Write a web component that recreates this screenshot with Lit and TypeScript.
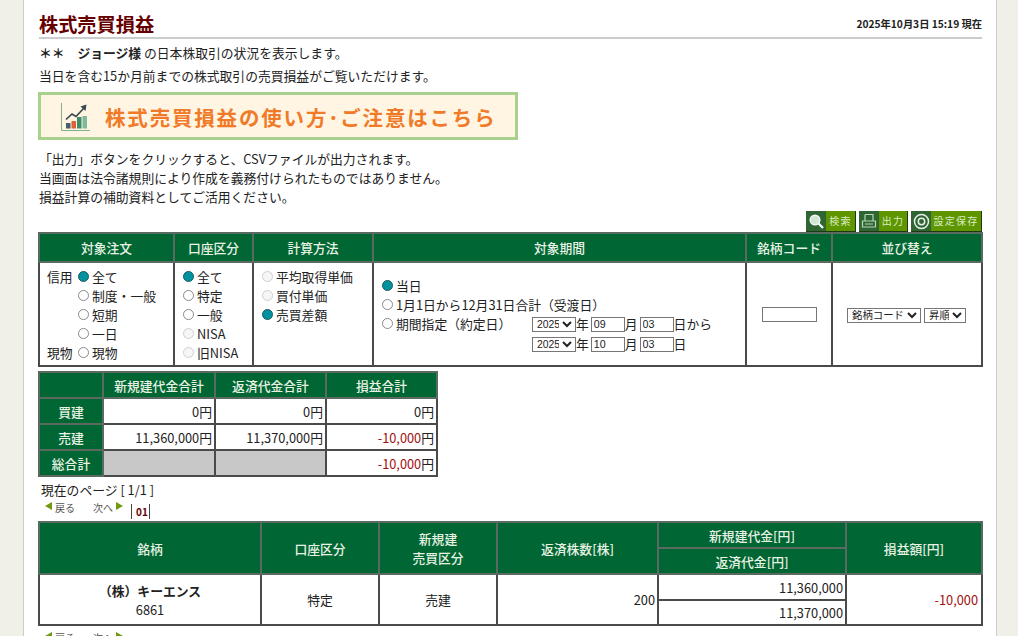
import { LitElement, html, css } from "lit";
import { customElement } from "lit/decorators.js";

@customElement("app-root")
export class AppRoot extends LitElement {
  static styles = css`
    :host { display: block; height: 636px; overflow: hidden; font-family: "Noto Sans CJK JP", "Noto Sans", sans-serif; font-size: 12.8px; color: #222; background: #f0f0e8; }
    .page { width: 974px; margin-left: 23px; box-sizing: border-box; background: #fff; border-left: 1px solid #ccc; border-right: 1px solid #ccc; padding: 12px 14px 0 15px; height: 800px; }
    .head { display: flex; justify-content: space-between; align-items: flex-end; border-bottom: 2px solid #ccc; height: 25px; }
    h1 { margin: 0; font-size: 19.2px; line-height: 25px; font-weight: 700; color: #660000; }
    .now { font-size: 10.24px; font-weight: 700; line-height: 14px; margin-bottom: 6px; color: #222; }
    p { margin: 0; line-height: 19px; }
    .l1 { margin-top: 4px; line-height: 20px; }
    .l2 { margin-top: 3px; line-height: 20px; }
    .banner { margin-top: 6px; width: 480px; height: 48px; box-sizing: border-box; border: 3px solid #a9d18e; background: #fff5e2; display: flex; align-items: center; padding: 1px 0 0 18px; margin-left: -1px; color: #f07a28; font-size: 20.5px; font-weight: 700; letter-spacing: 1.82px; }
    .banner svg { margin-right: 14px; flex: none; }
    .notes { margin-top: 9px; }
    .btns { display: flex; justify-content: flex-end; gap: 3px; margin-top: 5px; height: 21px; }
    .btn { display: flex; height: 21px; box-sizing: border-box; border-right: 1px solid #1c3a12; border-bottom: 1px solid #1c3a12; background: #5f9600; color: #d8ecc0; font-size: 10px; line-height: 20px; letter-spacing: 1.25px; }
    .btn .ic { background: #2f6433; display: flex; align-items: center; justify-content: center; width: 20px; flex: none; }
    .btn .tx { flex: 1; text-align: center; white-space: nowrap; }
    .b1 { width: 50px; }
    .b2 { width: 49px; }
    .b3 { width: 71px; }
    table { border-collapse: collapse; table-layout: fixed; margin-left: -1px; }
    td, th { border: 2px solid #4a4a4a; padding: 0; }
    th { background: #006633; color: #e8f2e4; font-weight: 500; border-color: #5a6a60; text-align: center; font-size: 12.8px; }
    .t1 { width: 943px; }
    .t1 th { height: 27px; }
    .t1 td { height: 104px; box-sizing: border-box; vertical-align: middle; }
    .radio { display: flex; align-items: center; height: 19px; white-space: nowrap; }
    input[type="radio"] { appearance: none; box-sizing: border-box; margin: 0 3px 0 0; width: 11px; height: 11px; border: 1px solid #8a8a8a; border-radius: 50%; background: #fff; flex: none; }
    input[type="radio"]:checked { background: #00939f; border-color: #1f5a60; }
    input[type="radio"]:disabled { border-color: #d0d0d0; background: #f6f6f6; }
    .lbl { width: 31px; flex: none; }
    .t1 td.c1 { padding-left: 7px; vertical-align: top; padding-top: 4px; }
    .t1 td.c2, .t1 td.c3 { padding-left: 8px; vertical-align: top; padding-top: 4px; }
    .t1 td.c4 { padding-left: 8px; }
    .period { display: grid; grid-template-columns: 150px auto; }
    .dates { display: flex; align-items: center; height: 19px; white-space: nowrap; }
    .dates.second { margin-top: 1px; }
    .dates select, .dates .num { margin-top: 2px; }
    select { font-size: 10.4px; height: 15px; padding: 0; border: 1px solid #767676; background: #fff; color: #222; border-radius: 0; box-sizing: border-box; font-family: "Liberation Sans", "Noto Sans CJK JP", sans-serif; }
    .yr { width: 44px; }
    .s1 { width: 74px; }
    .s2 { width: 42px; }
    .num { width: 34px; height: 15px; box-sizing: border-box; border: 1px solid #767676; font-size: 10.67px; font-family: "Liberation Sans", sans-serif; padding: 0 2px; margin: 0 0 0 2px; color: #222; }
    .code { width: 55px; height: 15px; box-sizing: border-box; border: 1px solid #767676; display: block; margin: 0 auto; }
    .sort { display: flex; justify-content: center; gap: 3px; margin: 3px 1px 0 0; }
    .t2 { width: 398px; margin-top: 4px; }
    .t2 th, .t2 td { height: 24px; }
    .t2 td { text-align: right; padding-right: 2px; }
    .gray { background: #c8c8c8; }
    .neg { color: #a01010; }
    .pg { line-height: 19px; margin: 3px 0 0 2px; }
    .nav { display: flex; align-items: flex-start; height: 22px; margin-left: 6px; font-size: 10px; color: #555; line-height: 16px; }
    .nav .tri { margin-top: 3px; flex: none; }
    .nav .sp { margin: 1px 0 0 3px; }
    .nav .nx { margin: 1px 3px 0 18px; }
    .cur { margin: 5px 0 0 8px; border-left: 1px solid #444; border-right: 1px solid #444; padding: 0 1px 0 4px; color: #660000; font-weight: 700; font-size: 10px; line-height: 15px; height: 15px; }
    .t3 { width: 943px; }
    .t3 th { height: 24px; }
    .t3 td { height: 23px; text-align: center; }
    .t3 td.top { height: 24px; }
    .t3 td.r { text-align: right; padding-right: 2px; }
    .t3 td.pl { text-align: right; padding-right: 3px; }
    .two { line-height: 19px; }
    b { font-weight: 700; }
    .after { margin-top: 3px; }
  `;

  private radio(label: string, checked = false, disabled = false) {
    return html`<label class="radio"><input type="radio" ?checked=${checked} ?disabled=${disabled} />${label}</label>`;
  }

  private tri(left: boolean) {
    return html`<svg class="tri" width="7" height="8" viewBox="0 0 7 8">
      <polygon points=${left ? "7,0 7,8 0,4" : "0,0 0,8 7,4"} fill="#6f9a12"></polygon>
    </svg>`;
  }

  private nav(extra = true) {
    return html`<div class="nav ${extra ? "" : "after"}">
      ${this.tri(true)}<span class="sp">戻る</span><span class="nx">次へ</span>${this.tri(false)}
      ${extra ? html`<span class="cur">01</span>` : ""}
    </div>`;
  }

  render() {
    return html`<div class="page">
      <div class="head">
        <h1>株式売買損益</h1>
        <div class="now">2025年10月3日 15:19 現在</div>
      </div>
      <p class="l1"><b>＊＊　ジョージ様</b> の日本株取引の状況を表示します。</p>
      <p class="l2">当日を含む15か月前までの株式取引の売買損益がご覧いただけます。</p>
      <div class="banner">
        <svg width="32" height="30" viewBox="0 0 32 30">
          <path d="M2.5 1V28.5H31" fill="none" stroke="#7fb08f" stroke-width="1"></path>
          <rect x="7" y="21" width="4.5" height="5.5" fill="#44606c"></rect>
          <rect x="12.5" y="19" width="4.5" height="7.5" fill="#e0603a"></rect>
          <rect x="18" y="15" width="4.5" height="11.5" fill="#3f8a68"></rect>
          <rect x="23.5" y="14" width="4.5" height="12.5" fill="#7fb89a"></rect>
          <path d="M7 17.5L13 12L17 14.5L25 6" fill="none" stroke="#37474f" stroke-width="1.6"></path>
          <polygon points="21.5,4.5 27.5,2.5 26.5,9" fill="#37474f"></polygon>
        </svg>
        <span>株式売買損益の使い方･ご注意はこちら</span>
      </div>
      <div class="notes">
        <p>「出力」ボタンをクリックすると、CSVファイルが出力されます。</p>
        <p>当画面は法令諸規則により作成を義務付けられたものではありません。</p>
        <p>損益計算の補助資料としてご活用ください。</p>
      </div>
      <div class="btns">
        <div class="btn b1">
          <span class="ic"><svg width="17" height="17" viewBox="0 0 17 17"><circle cx="7" cy="7" r="4.8" fill="#cfe6d2" stroke="#f2f7f2" stroke-width="1.5"></circle><path d="M10.5 10.5L15 15" stroke="#f2f7f2" stroke-width="2.4"></path></svg></span>
          <span class="tx">検索</span>
        </div>
        <div class="btn b2">
          <span class="ic"><svg width="16" height="16" viewBox="0 0 16 16"><path d="M4 1.5H12V8M4 8V1.5M1.5 8H14.5V14H1.5ZM4 11H12" fill="none" stroke="#b9d6b9" stroke-width="1.2"></path></svg></span>
          <span class="tx">出力</span>
        </div>
        <div class="btn b3">
          <span class="ic"><svg width="17" height="17" viewBox="0 0 17 17"><circle cx="8.5" cy="8.5" r="7" fill="none" stroke="#e6f0e6" stroke-width="1.5"></circle><circle cx="8.5" cy="8.5" r="3.2" fill="none" stroke="#e6f0e6" stroke-width="1.5"></circle></svg></span>
          <span class="tx">設定保存</span>
        </div>
      </div>

      <table class="t1">
        <colgroup><col style="width:135px" /><col style="width:79px" /><col style="width:120px" /><col style="width:373px" /><col style="width:86px" /><col style="width:150px" /></colgroup>
        <tr><th>対象注文</th><th>口座区分</th><th>計算方法</th><th>対象期間</th><th>銘柄コード</th><th>並び替え</th></tr>
        <tr>
          <td class="c1">
            <div class="radio"><span class="lbl">信用</span>${this.radio("全て", true)}</div>
            <div class="radio"><span class="lbl"></span>${this.radio("制度・一般")}</div>
            <div class="radio"><span class="lbl"></span>${this.radio("短期")}</div>
            <div class="radio"><span class="lbl"></span>${this.radio("一日")}</div>
            <div class="radio"><span class="lbl">現物</span>${this.radio("現物")}</div>
          </td>
          <td class="c2">
            ${this.radio("全て", true)}${this.radio("特定")}${this.radio("一般")}${this.radio("NISA", false, true)}${this.radio("旧NISA", false, true)}
          </td>
          <td class="c3">
            ${this.radio("平均取得単価", false, true)}${this.radio("買付単価", false, true)}${this.radio("売買差額", true)}
          </td>
          <td class="c4">
            ${this.radio("当日", true)}${this.radio("1月1日から12月31日合計（受渡日）")}
            <div class="period">
              ${this.radio("期間指定（約定日）")}
              <div class="dates"><select class="yr"><option>2025</option></select>年<input class="num" value="09" />月<input class="num" value="03" />日から</div>
              <span></span>
              <div class="dates second"><select class="yr"><option>2025</option></select>年<input class="num" value="10" />月<input class="num" value="03" />日</div>
            </div>
          </td>
          <td><input class="code" /></td>
          <td>
            <div class="sort">
              <select class="s1"><option>銘柄コード</option></select>
              <select class="s2"><option>昇順</option></select>
            </div>
          </td>
        </tr>
      </table>

      <table class="t2">
        <colgroup><col style="width:64px" /><col style="width:112px" /><col style="width:111px" /><col style="width:111px" /></colgroup>
        <tr><th></th><th>新規建代金合計</th><th>返済代金合計</th><th>損益合計</th></tr>
        <tr><th>買建</th><td>0円</td><td>0円</td><td>0円</td></tr>
        <tr><th>売建</th><td>11,360,000円</td><td>11,370,000円</td><td><span class="neg">-10,000</span>円</td></tr>
        <tr><th>総合計</th><td class="gray"></td><td class="gray"></td><td><span class="neg">-10,000</span>円</td></tr>
      </table>

      <div class="pg">現在のページ [ 1/1 ]</div>
      ${this.nav()}

      <table class="t3">
        <colgroup><col style="width:222px" /><col style="width:118px" /><col style="width:118px" /><col style="width:161px" /><col style="width:188px" /><col style="width:136px" /></colgroup>
        <tr>
          <th rowspan="2">銘柄</th>
          <th rowspan="2">口座区分</th>
          <th rowspan="2" class="two">新規建<br />売買区分</th>
          <th rowspan="2">返済株数[株]</th>
          <th>新規建代金[円]</th>
          <th rowspan="2">損益額[円]</th>
        </tr>
        <tr><th>返済代金[円]</th></tr>
        <tr>
          <td rowspan="2" class="two"><b>（株）キーエンス</b><br />6861</td>
          <td rowspan="2">特定</td>
          <td rowspan="2">売建</td>
          <td rowspan="2" class="r">200</td>
          <td class="r top">11,360,000</td>
          <td rowspan="2" class="pl neg">-10,000</td>
        </tr>
        <tr><td class="r">11,370,000</td></tr>
      </table>
      ${this.nav(false)}
    </div>`;
  }
}
